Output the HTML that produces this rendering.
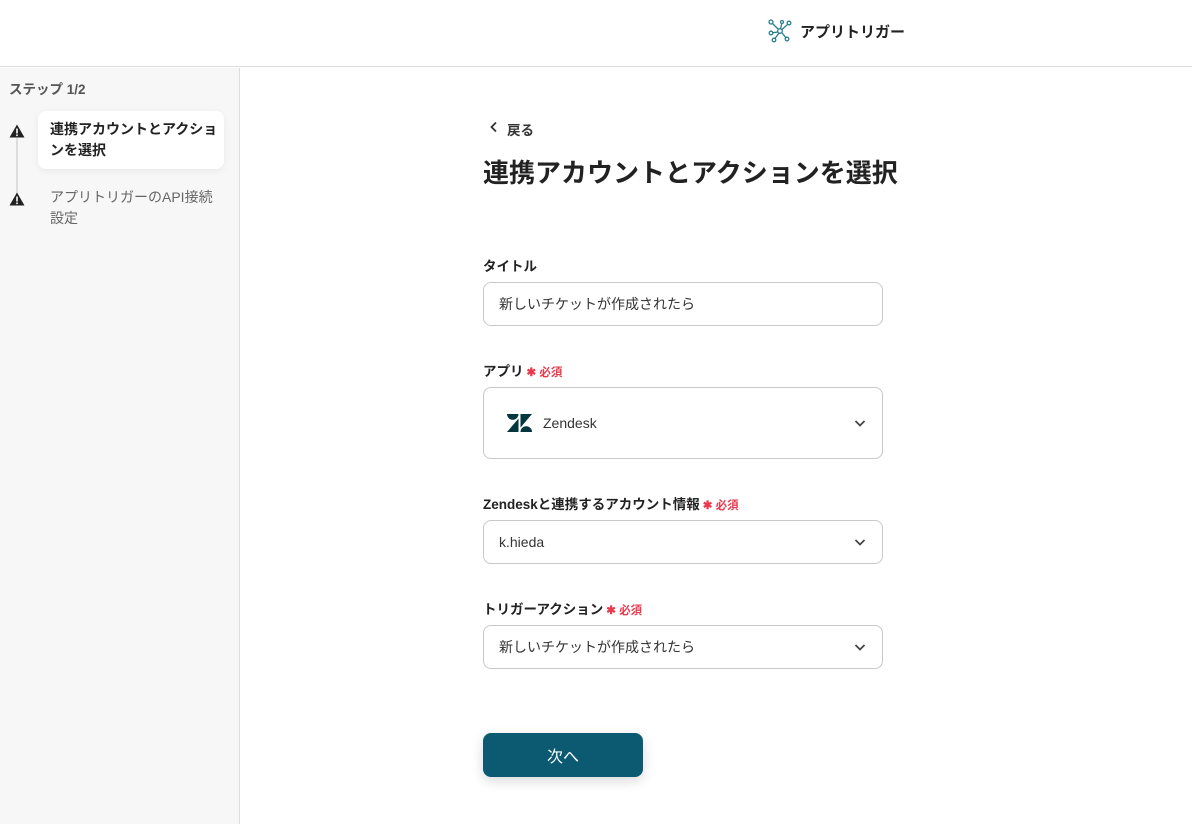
<!DOCTYPE html>
<html><head><meta charset="utf-8"><style>
*{box-sizing:border-box;margin:0;padding:0}
body{width:1192px;height:824px;overflow:hidden;background:#fff;font-family:"Liberation Sans","Noto Sans CJK JP",sans-serif;color:#222;position:relative}
.hdr{position:absolute;left:0;top:0;width:1192px;height:67px;border-bottom:1px solid #ddd;background:#fff}
.side{position:absolute;left:0;top:68px;width:240px;height:756px;background:#f7f7f7;border-right:1px solid #ddd}
.abs{position:absolute}
.lbl{position:absolute;left:483px;font-size:13.5px;font-weight:bold;color:#222}
.req{color:#e8394d;font-size:11.5px;font-weight:bold;margin-left:3px}
.box{position:absolute;left:483px;width:400px;border:1px solid #c8c8c8;border-radius:8px;background:#fff;font-size:14px;color:#333;padding-left:15px;display:flex;align-items:center}
.chev{position:absolute;right:16px;top:50%;margin-top:-5px}
</style></head><body>
<div class="hdr">
<svg class="abs" style="left:768px;top:19px" width="24" height="24" viewBox="0 0 24 24" fill="none" stroke="#2a7f8f" stroke-width="1.3"><circle cx="3" cy="3" r="2"/><circle cx="12" cy="12" r="2.3"/><circle cx="21" cy="4" r="1.8"/><circle cx="3" cy="14" r="1.8"/><circle cx="6" cy="21" r="1.8"/><circle cx="19" cy="20" r="1.8"/><circle cx="14" cy="3" r="1.5"/><path d="M4.5 4.5L10 10M14 10.5L19.8 5.2M10 13L4.5 13.8M11 14L7 19.5M13.8 13.5L17.8 18.7M12.5 9.8L13.8 4.5"/></svg>
<div class="abs" style="left:800px;top:21px;font-size:15px;font-weight:bold;color:#222">アプリトリガー</div>
</div>
<div class="side">
<div class="abs" style="left:9px;top:10px;font-size:13.5px;font-weight:bold;color:#555">ステップ 1/2</div>
<div class="abs" style="left:16px;top:70px;width:2px;height:58px;background:#ddd"></div>
<svg class="abs" style="left:9px;top:56px" width="16" height="14" viewBox="0 0 16 14"><path d="M8 0.5L15.5 13.5H0.5Z" fill="#222"/><rect x="7.2" y="4.5" width="1.6" height="5" fill="#fff"/><rect x="7.2" y="10.5" width="1.6" height="1.6" fill="#fff"/></svg>
<svg class="abs" style="left:9px;top:124px" width="16" height="14" viewBox="0 0 16 14"><path d="M8 0.5L15.5 13.5H0.5Z" fill="#222"/><rect x="7.2" y="4.5" width="1.6" height="5" fill="#fff"/><rect x="7.2" y="10.5" width="1.6" height="1.6" fill="#fff"/></svg>
<div class="abs" style="left:38px;top:43px;width:186px;height:58px;background:#fff;border-radius:8px;box-shadow:0 2px 8px rgba(0,0,0,.06);padding:8px 4px 8px 12px;font-size:14px;font-weight:bold;line-height:21px;color:#222">連携アカウントとアクションを選択</div>
<div class="abs" style="left:50px;top:119px;width:170px;font-size:14px;line-height:21px;color:#666">アプリトリガーのAPI接続設定</div>
</div>
<svg class="abs" style="left:489px;top:121px" width="10" height="12" viewBox="0 0 10 12"><path d="M7 1.5L2.5 6L7 10.5" stroke="#333" stroke-width="1.8" fill="none"/></svg>
<div class="abs" style="left:507px;top:119px;font-size:13.5px;color:#333;font-weight:bold">戻る</div>
<div class="abs" style="left:483px;top:153px;font-size:26px;font-weight:bold;color:#222">連携アカウントとアクションを選択</div>
<div class="lbl" style="top:255px">タイトル</div>
<div class="box" style="top:282px;height:44px">新しいチケットが作成されたら</div>
<div class="lbl" style="top:360px">アプリ<span class="req">✱ 必須</span></div>
<div class="box" style="top:387px;height:72px;padding-left:23px">
<svg width="25" height="18" viewBox="0 0 25 18" style="margin-right:11px"><path d="M0 0H11.5A5.75 5.75 0 0 1 0 0Z M11.5 4.5V18H0Z M13.5 0H25L13.5 13.5Z M13.5 18A5.75 5.75 0 0 1 25 18Z" fill="#03363d"/></svg>Zendesk
<svg class="chev" width="12" height="10" viewBox="0 0 12 10"><path d="M1.5 3L6 7.5L10.5 3" stroke="#444" stroke-width="1.7" fill="none"/></svg></div>
<div class="lbl" style="top:493px">Zendeskと連携するアカウント情報<span class="req">✱ 必須</span></div>
<div class="box" style="top:520px;height:44px">k.hieda<svg class="chev" width="12" height="10" viewBox="0 0 12 10"><path d="M1.5 3L6 7.5L10.5 3" stroke="#444" stroke-width="1.7" fill="none"/></svg></div>
<div class="lbl" style="top:598px">トリガーアクション<span class="req">✱ 必須</span></div>
<div class="box" style="top:625px;height:44px">新しいチケットが作成されたら<svg class="chev" width="12" height="10" viewBox="0 0 12 10"><path d="M1.5 3L6 7.5L10.5 3" stroke="#444" stroke-width="1.7" fill="none"/></svg></div>
<div class="abs" style="left:483px;top:733px;width:160px;height:44px;background:#0c5a72;border-radius:8px;color:#fff;font-size:16px;display:flex;align-items:center;justify-content:center;box-shadow:0 4px 12px rgba(0,0,0,.15)">次へ</div>
</body></html>
